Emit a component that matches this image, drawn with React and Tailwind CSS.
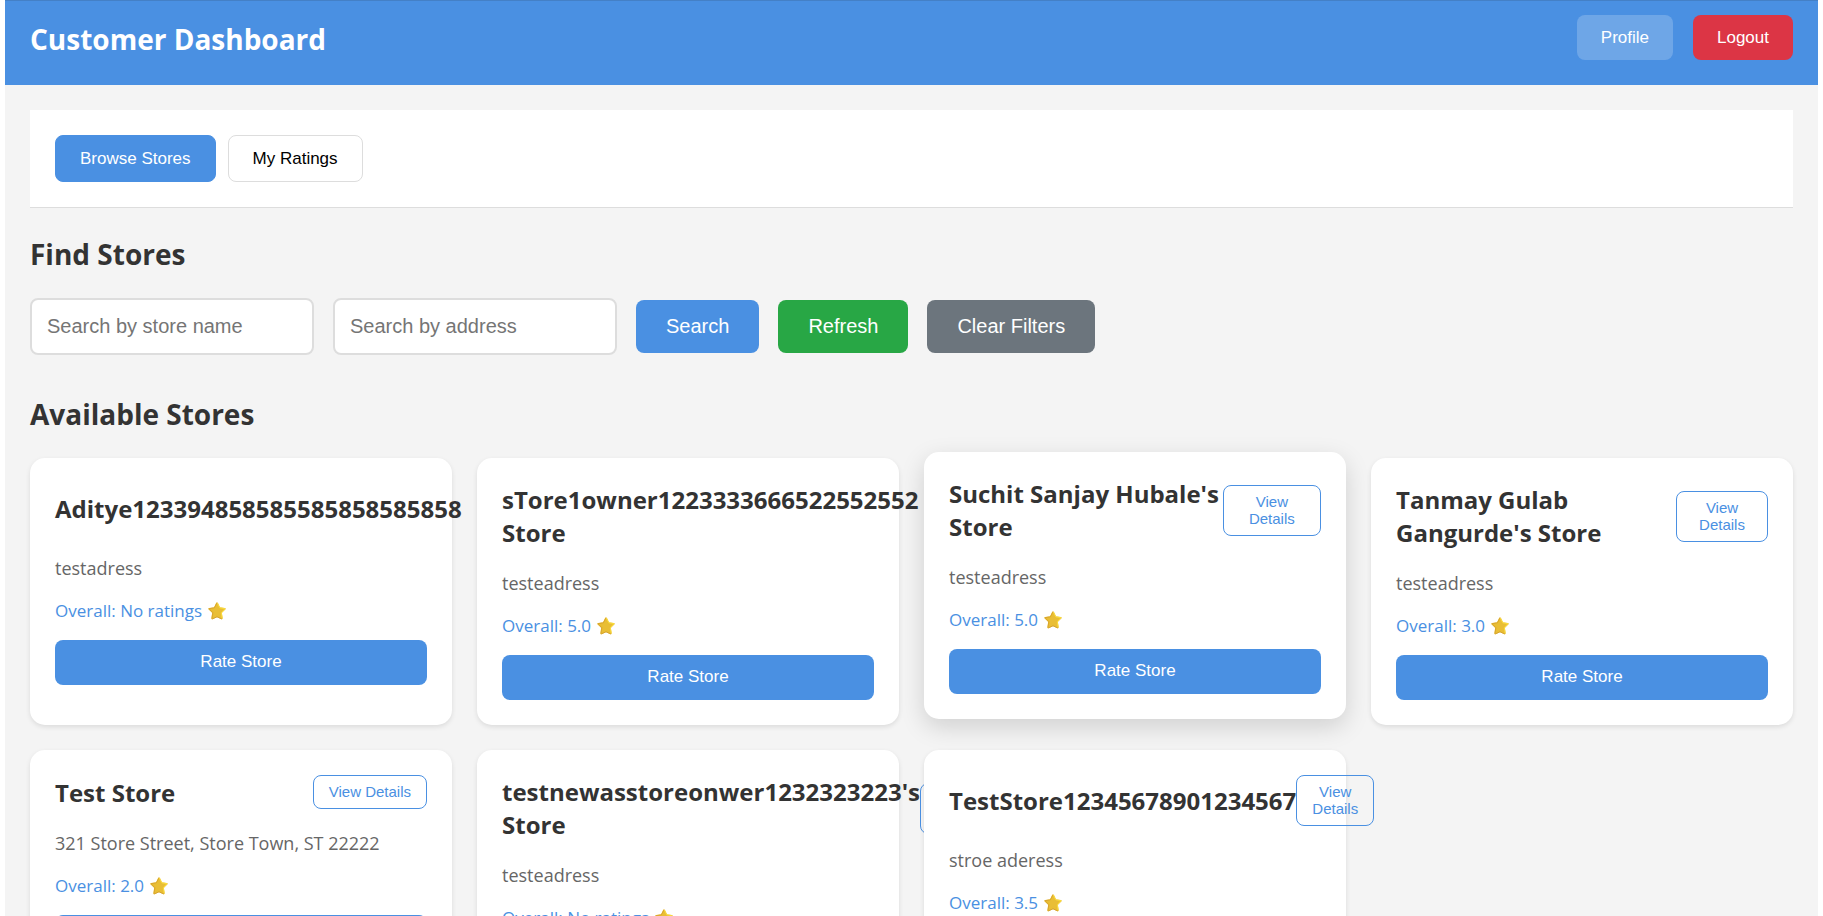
const stores = [
  { name: 'Aditye123394858585585858585858', address: 'testadress', rating: 'No ratings', longName: true },
  { name: 'sTore1owner1223333666522552552 Store', address: 'testeadress', rating: '5.0', longName: true },
  { name: "Suchit Sanjay Hubale's Store", address: 'testeadress', rating: '5.0', raised: true },
  { name: "Tanmay Gulab Gangurde's Store", address: 'testeadress', rating: '3.0' },
  { name: 'Test Store', address: '321 Store Street, Store Town, ST 22222', rating: '2.0' },
  { name: "testnewasstoreonwer1232323223's Store", address: 'testeadress', rating: 'No ratings' },
  { name: 'TestStore12345678901234567', address: 'stroe aderess', rating: '3.5' },
];

const uiFont = "font-['Open_Sans','Noto_Sans',sans-serif]";
const controlFont = "font-['Liberation_Sans',Arial,sans-serif]";

function Star() {
  return (
    <svg className="size-[18px] shrink-0" viewBox="0 0 18 18" aria-hidden="true">
      <path
        d="M9 1.2 L11.4 6.1 L16.8 6.9 L12.9 10.7 L13.8 16.4 L9 14.2 L4.2 16.4 L5.1 10.7 L1.2 6.9 L6.6 6.1 Z"
        fill="#e9be35"
        stroke="#e9be35"
        strokeWidth="1.8"
        strokeLinejoin="round"
      />
      <path d="M9 .9 L6.4 5.8 L1 6.7 L4.8 10.7 L4 16.6" fill="none" stroke="#d9a62e" strokeWidth="1" strokeLinejoin="round" />
      <path d="M4.2 17 L9 14.8 L13.8 17" fill="none" stroke="#cf9a2b" strokeWidth=".8" strokeLinejoin="round" />
      <path d="M9.4 1 L11.8 5.8 L17 6.7 L13.3 10.8 L14.2 16.2" fill="none" stroke="#fbdd3c" strokeWidth="1" strokeLinejoin="round" />
    </svg>
  );
}

function StoreCard({ name, address, rating, raised, longName }) {
  return (
    <article
      className={
        raised
          ? 'min-w-0 -translate-y-1.5 rounded-[15px] bg-white p-[25px] shadow-[0_8px_25px_rgba(0,0,0,0.15)]'
          : 'min-w-0 rounded-[15px] bg-white p-[25px] shadow-[0_2px_5px_rgba(0,0,0,0.1)]'
      }
    >
      <div className="mb-5 flex items-center justify-between">
        <h3 className={`text-[24px] leading-[33px] font-bold text-[#333] ${longName ? 'min-w-[424px]' : ''}`}>{name}</h3>
        <button
          type="button"
          className={`${controlFont} rounded-lg border border-[#4a90e2] px-[15px] pt-[7px] pb-2 text-[15px] leading-[17px] text-[#4a90e2]`}
        >
          View Details
        </button>
      </div>
      <p className="mb-4 text-[18px] leading-[28px] text-[#666]">{address}</p>
      <p className="mb-4 flex items-center gap-1.5 text-[17px] leading-[26px] text-[#4a90e2]">
        Overall: {rating} <Star />
      </p>
      <button type="button" className={`${controlFont} h-[45px] w-full rounded-lg bg-[#4a90e2] pb-0.5 text-[17px] text-white`}>
        Rate Store
      </button>
    </article>
  );
}

export default function App() {
  return (
    <div className={`${uiFont} h-screen overflow-hidden bg-white px-[5px]`}>
      <div className="min-h-screen bg-[#f4f4f4]">
        <header className="flex items-center justify-between border-t border-[#4480c6] bg-[#4a90e2] px-[25px] pt-3.5 pb-[25px]">
          <h1 className="pt-[3px] text-[28px] leading-[42px] font-bold text-white">Customer Dashboard</h1>
          <div className={`${controlFont} flex gap-5 text-[17px] text-white`}>
            <button type="button" className="h-[45px] rounded-lg bg-white/20 px-6">Profile</button>
            <button type="button" className="h-[45px] rounded-lg bg-[#dc3545] px-6">Logout</button>
          </div>
        </header>

        <main className="p-[25px]">
          <nav className={`${controlFont} mb-[26px] flex gap-3 border-b border-[#ddd] bg-white p-[25px] text-[17px]`}>
            <button type="button" className="h-[47px] rounded-lg border border-[#4a90e2] bg-[#4a90e2] px-6 text-white">Browse Stores</button>
            <button type="button" className="h-[47px] rounded-lg border border-[#ddd] bg-white px-6 text-black">My Ratings</button>
          </nav>

          <section className="mb-[39px]">
            <h2 className="mb-6 text-[28px] leading-10 font-bold text-[#333]">Find Stores</h2>
            <form className={`${controlFont} flex flex-wrap items-center gap-[19px] text-[20px]`} onSubmit={(e) => e.preventDefault()}>
              <input
                type="text"
                aria-label="Store name"
                placeholder="Search by store name"
                className="h-[57px] w-[284px] rounded-lg border-2 border-[#ddd] bg-white px-[15px] placeholder:text-[#757575]"
              />
              <input
                type="text"
                aria-label="Address"
                placeholder="Search by address"
                className="h-[57px] w-[284px] rounded-lg border-2 border-[#ddd] bg-white px-[15px] placeholder:text-[#757575]"
              />
              <button type="submit" className="h-[53px] rounded-lg bg-[#4a90e2] px-[30px] pb-0.5 text-white">Search</button>
              <button type="button" className="h-[53px] rounded-lg bg-[#28a745] px-[30px] pb-0.5 text-white">Refresh</button>
              <button type="reset" className="h-[53px] rounded-lg bg-[#6c757d] px-[30px] pb-0.5 text-white">Clear Filters</button>
            </form>
          </section>

          <section>
            <h2 className="mb-6 text-[28px] leading-10 font-bold text-[#333]">Available Stores</h2>
            <div className="grid grid-cols-[repeat(auto-fill,minmax(375px,1fr))] gap-[25px]">
              {stores.map((store) => (
                <StoreCard key={store.name} {...store} />
              ))}
            </div>
          </section>
        </main>
      </div>
    </div>
  );
}
